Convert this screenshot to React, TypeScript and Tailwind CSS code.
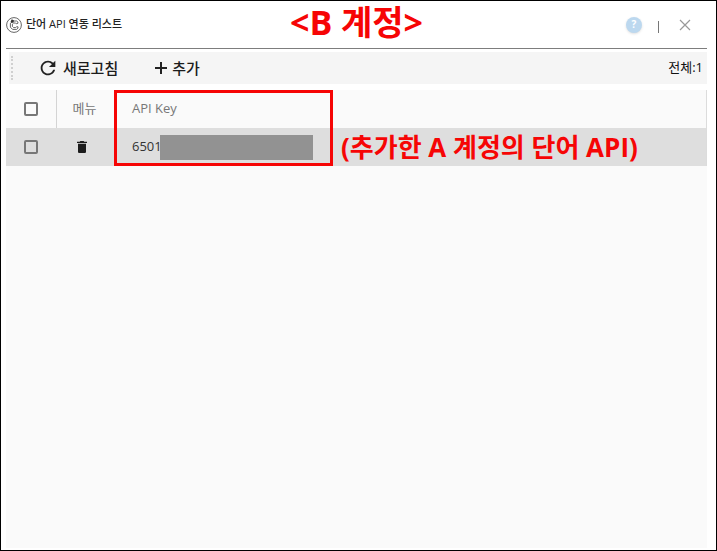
import { useState } from 'react';

// --- Interfaces & Types ---
interface ApiKeyItem {
  id: number;
  prefix: string;
  note: string;
}

interface HeaderProps {
  title: string;
  account: string;
}

interface CheckProps {
  label: string;
  checked: boolean;
  onChange: () => void;
}

const items: ApiKeyItem[] = [
  { id: 1, prefix: '6501', note: '(추가한 A 계정의 단어 API)' },
];

// --- Icons ---
const LogoIcon = () => (
  <svg width="16" height="16" viewBox="0 0 16 16" fill="none" stroke="#555" aria-hidden="true">
    <circle cx="8" cy="8" r="7.4" strokeWidth="0.9" />
    <path d="M12 6.200V5.200L10.600 4H6.800L4.400 6.200V10.200L6.600 12.400H10.600L12 11.200V9.800H10.400L9.600 10.600H7.600L6.400 9.400V7.200L7.600 6H9.600L10.400 6.800Z" strokeWidth="0.9" />
    <path d="M4.600 4.400 5.800 2.200 8 3.400 7.400 5.400 5.600 6Z" fill="#333" stroke="none" />
  </svg>
);

const RefreshIcon = () => (
  <svg width="22" height="22" viewBox="0 0 24 24" fill="#222" aria-hidden="true">
    <path d="M17.65 6.35A7.958 7.958 0 0 0 12 4c-4.42 0-7.99 3.58-7.99 8s3.57 8 7.99 8c3.73 0 6.84-2.55 7.73-6h-2.08A5.99 5.99 0 0 1 12 18c-3.31 0-6-2.69-6-6s2.69-6 6-6c1.66 0 3.14.69 4.22 1.78L13 11h7V4l-2.35 2.35z" />
  </svg>
);

const PlusIcon = () => (
  <svg width="14" height="14" viewBox="0 0 14 14" stroke="#222" strokeWidth="2" aria-hidden="true">
    <path d="M7 1v12M1 7h12" />
  </svg>
);

const TrashIcon = () => (
  <svg width="16" height="16" viewBox="0 0 24 24" fill="#1c1c1c" aria-hidden="true">
    <path d="M6 19c0 1.100.9 2 2 2h8c1.100 0 2-.9 2-2V7H6v12zM19.500 4H15.500l-1-1h-5l-1 1H4.500v2h15V4z" />
  </svg>
);

// --- Header ---
const Header = ({ title, account }: HeaderProps) => (
  <header className="relative flex h-12 items-center justify-between border-b border-[#7d7d7d]">
    <div className="flex items-center gap-1">
      <LogoIcon />
      <h1 className="text-[11px] font-medium text-[#222]">{title}</h1>
    </div>
    <p className="pointer-events-none absolute inset-x-0 top-0 text-center text-[34px] leading-[42px] font-bold text-[#f60505]">
      {account}
    </p>
    <div className="flex items-center gap-4 pr-4">
      <button
        type="button"
        aria-label="도움말"
        className="flex size-4 items-center justify-center rounded-full bg-[#bcd8ef] text-[10px] font-bold text-white shadow-sm"
      >
        ?
      </button>
      <span className="mt-1 h-3 w-px bg-[#777]" />
      <button type="button" aria-label="닫기" className="ml-1">
        <svg width="12" height="12" viewBox="0 0 12 12" stroke="#999" strokeWidth="1.2">
          <path d="M1 1l10 10M11 1L1 11" />
        </svg>
      </button>
    </div>
  </header>
);

// --- Toolbar ---
const Toolbar = ({ total }: { total: number }) => (
  <div className="mt-[3px] ml-[3px] flex h-8 items-center justify-between bg-[#f5f5f5] pr-1 pl-0.5">
    <div className="flex items-center">
      <span className="h-6 border-l-2 border-dotted border-[#d0d0d0]" />
      <button type="button" className="ml-6 flex items-center gap-1 text-[15px] font-medium text-[#1c1c1c]">
        <RefreshIcon />
        새로고침
      </button>
      <button type="button" className="ml-9 flex items-center gap-1 text-[15px] font-medium text-[#1c1c1c]">
        <PlusIcon />
        추가
      </button>
    </div>
    <span className="text-[13px] text-[#111]">전체:{total}</span>
  </div>
);

const Check = ({ label, checked, onChange }: CheckProps) => (
  <input
    type="checkbox"
    aria-label={label}
    checked={checked}
    onChange={onChange}
    className="block size-[14px] appearance-none rounded-xs border-2 border-[#777] checked:bg-[#777]"
  />
);

// --- API key table ---
const KeyTable = () => {
  const [selected, setSelected] = useState<number[]>([]);
  const allSelected = selected.length === items.length;

  const toggle = (id: number) => {
    setSelected(selected.includes(id) ? selected.filter((s) => s !== id) : [...selected, id]);
  };

  return (
    <div className="relative mt-1.5 border-r border-[#dcdcdc]">
      <table className="w-full table-fixed border-collapse text-left text-[13px]">
        <thead>
          <tr className="h-[38px] text-[#777]">
            <th className="w-[50px] border-r border-[#d4d4d4] p-0 pl-[18px]">
              <Check
                label="전체 선택"
                checked={allSelected}
                onChange={() => setSelected(allSelected ? [] : items.map((item) => item.id))}
              />
            </th>
            <th className="w-[60px] p-0 pl-4 font-normal">메뉴</th>
            <th className="p-0 pl-4 font-normal">API Key</th>
          </tr>
        </thead>
        <tbody>
          {items.map((item) => (
            <tr key={item.id} className="h-[38px] bg-[#dedede] text-[#333]">
              <td className="p-0 pl-[18px]">
                <Check label={item.prefix} checked={selected.includes(item.id)} onChange={() => toggle(item.id)} />
              </td>
              <td className="p-0 pl-[18px]">
                <button type="button" aria-label="삭제" className="block">
                  <TrashIcon />
                </button>
              </td>
              <td className="p-0 pl-4">
                <div className="flex items-center whitespace-nowrap">
                  <span className="w-7 shrink-0">{item.prefix}</span>
                  <span className="h-[25px] w-[153px] shrink-0 bg-[#929292]" />
                  <span className="ml-7 text-[26px] leading-9 font-bold text-[#f60505]">{item.note}</span>
                </div>
              </td>
            </tr>
          ))}
        </tbody>
      </table>
      {/* Frame that highlights the API Key column */}
      <div className="pointer-events-none absolute inset-y-0 left-[108px] w-[219px] border-3 border-[#f60505]" />
    </div>
  );
};

export default function App() {
  return (
    <main className="flex min-h-screen flex-col border border-black bg-white pr-[9px] pb-0.5 pl-[5px] font-['Open_Sans','Noto_Sans_CJK_KR',sans-serif]">
      <Header title="단어 API 연동 리스트" account="<B 계정>" />
      <Toolbar total={items.length} />
      <section className="flex-1 bg-[linear-gradient(white_6px,#fafafa_6px)]">
        <KeyTable />
      </section>
    </main>
  );
}
